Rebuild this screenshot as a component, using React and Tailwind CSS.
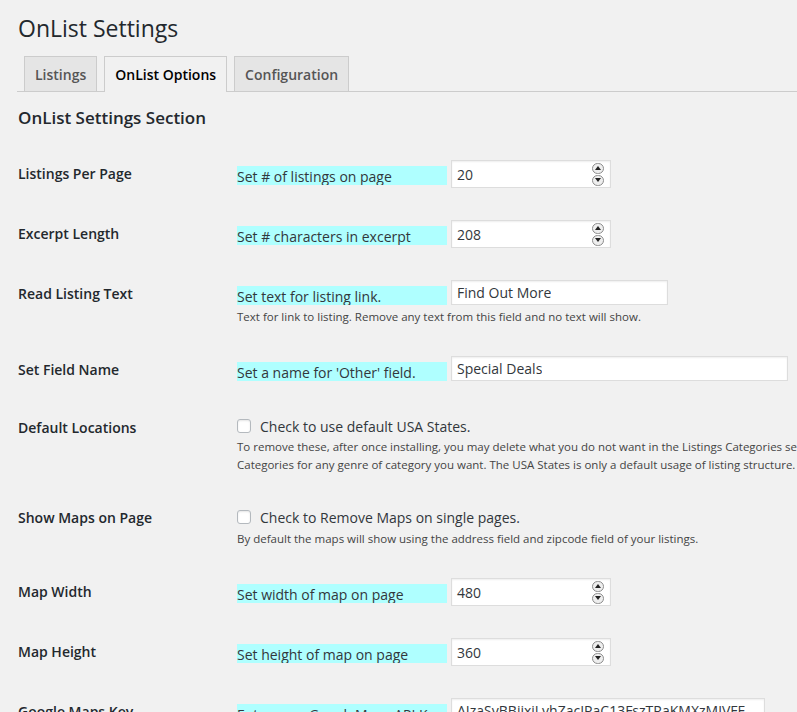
import React from 'react';

const Spinner = () => (
  <div className="flex flex-col gap-[1px] mr-[6px]">
    <div className="w-[12px] h-[11px] rounded-full border border-[#8c8c8c] bg-[#eee] flex items-center justify-center">
      <div className="w-0 h-0 border-l-[3px] border-r-[3px] border-b-[4px] border-l-transparent border-r-transparent border-b-[#222]" />
    </div>
    <div className="w-[12px] h-[11px] rounded-full border border-[#8c8c8c] bg-[#eee] flex items-center justify-center">
      <div className="w-0 h-0 border-l-[3px] border-r-[3px] border-t-[4px] border-l-transparent border-r-transparent border-t-[#222]" />
    </div>
  </div>
);

const Hint = ({ children }) => (
  <span className="mt-[6px] inline-block w-[210px] h-[19px] bg-[#afffff] text-[14px] leading-[21px] text-[#32373c] whitespace-nowrap overflow-hidden">
    {children}
  </span>
);

const NumberRow = ({ label, hint, value }) => (
  <div className="flex">
    <div className="w-[219px] shrink-0 pt-[20px] text-[14px] leading-[18px] font-semibold text-[#23282d]">{label}</div>
    <div className="py-[15px]">
      <div className="flex items-start h-[30px]">
        <Hint>{hint}</Hint>
        <div className="ml-[4px] w-[160px] h-[28px] bg-white border border-[#ddd] shadow-[inset_0_1px_2px_rgba(0,0,0,0.07)] flex items-center justify-between">
          <span className="pl-[5px] text-[14px] text-[#32373c]">{value}</span>
          <Spinner />
        </div>
      </div>
    </div>
  </div>
);

const TextRow = ({ label, hint, value, width, desc }) => (
  <div className="flex">
    <div className="w-[219px] shrink-0 pt-[20px] text-[14px] leading-[18px] font-semibold text-[#23282d]">{label}</div>
    <div className="py-[15px]">
      <div className="flex items-start h-[28px]">
        <Hint>{hint}</Hint>
        <div className={`ml-[4px] h-[25px] bg-white border border-[#ddd] shadow-[inset_0_1px_2px_rgba(0,0,0,0.07)] flex items-center ${width}`}>
          <span className="pl-[5px] text-[14px] text-[#32373c] whitespace-nowrap overflow-hidden">{value}</span>
        </div>
      </div>
      {desc && <p className="text-[11.5px] leading-[18px] text-[#444] whitespace-nowrap">{desc}</p>}
    </div>
  </div>
);

const CheckRow = ({ label, text, lines, tight }) => (
  <div className="flex">
    <div className="w-[219px] shrink-0 pt-[20px] text-[14px] leading-[18px] font-semibold text-[#23282d]">{label}</div>
    <div className="py-[15px]">
      <div className={`flex items-center ${tight ? 'h-[24px]' : 'h-[26px]'}`}>
        <span className="w-[14px] h-[14px] rounded-[3px] border border-[#b4b9be] bg-white shadow-[inset_0_1px_2px_rgba(0,0,0,0.1)]" />
        <span className="ml-[9px] text-[14px] text-[#32373c] whitespace-nowrap">{text}</span>
      </div>
      {lines.map((l) => (
        <p key={l} className="text-[11.5px] leading-[18px] text-[#444] whitespace-nowrap">{l}</p>
      ))}
    </div>
  </div>
);

export default function App() {
  const tab = 'ml-[7px] h-[35px] px-[10px] border border-b-0 border-[#ccc] text-[14px] font-semibold leading-[36px]';
  return (
    <div className="min-h-screen w-full overflow-hidden bg-[#f1f1f1] font-['Open_Sans',sans-serif] text-[#444]">
      <div className="pl-[17px]">
        <h1 className="pt-[13px] text-[23px] leading-[31px] font-normal text-[#23282d] pl-px">OnList Settings</h1>
        <nav className="mt-[12px] flex items-end border-b border-[#ccc]">
          <span className={`${tab} bg-[#e5e5e5] text-[#555]`}>Listings</span>
          <span className={`${tab} bg-[#f1f1f1] text-black -mb-px h-[36px]`}>OnList Options</span>
          <span className={`${tab} bg-[#e5e5e5] text-[#555]`}>Configuration</span>
        </nav>
        <h2 className="mt-[14px] pl-px text-[17px] leading-[24px] font-semibold text-[#23282d]">OnList Settings Section</h2>
        <div className="mt-[15px] pl-px">
          <NumberRow label="Listings Per Page" hint="Set # of listings on page" value="20" />
          <NumberRow label="Excerpt Length" hint="Set # characters in excerpt" value="208" />
          <TextRow
            label="Read Listing Text"
            hint="Set text for listing link."
            value="Find Out More"
            width="w-[217px]"
            desc="Text for link to listing. Remove any text from this field and no text will show."
          />
          <TextRow label="Set Field Name" hint="Set a name for 'Other' field." value="Special Deals" width="w-[337px]" />
          <CheckRow
            tight
            label="Default Locations"
            text="Check to use default USA States."
            lines={[
              'To remove these, after once installing, you may delete what you do not want in the Listings Categories section. You may also use the',
              'Categories for any genre of category you want. The USA States is only a default usage of listing structure.',
            ]}
          />
          <CheckRow
            label="Show Maps on Page"
            text="Check to Remove Maps on single pages."
            lines={['By default the maps will show using the address field and zipcode field of your listings.']}
          />
          <NumberRow label="Map Width" hint="Set width of map on page" value="480" />
          <NumberRow label="Map Height" hint="Set height of map on page" value="360" />
          <TextRow
            label="Google Maps Key"
            hint="Enter your GoogleMaps API Key"
            value="AIzaSyBBjjxiLvhZacIPaC13FszTRaKMXzMJVFE"
            width="w-[314px]"
          />
        </div>
      </div>
    </div>
  );
}
